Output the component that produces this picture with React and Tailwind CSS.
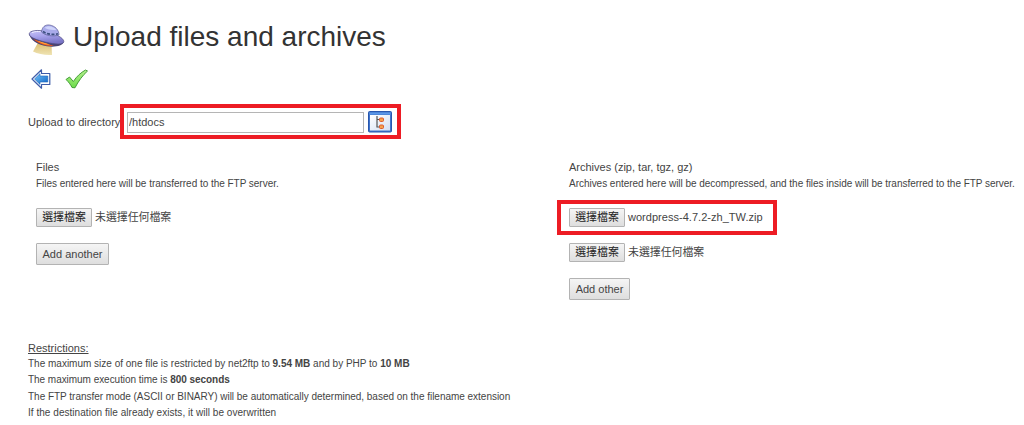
import clsx from 'clsx'

function UfoIcon() {
  return (
    <svg width="38" height="34" viewBox="0 0 38 34" className="shrink-0">
      <defs>
        <linearGradient id="hull" x1="0" y1="0" x2="0.3" y2="1">
          <stop offset="0" stopColor="#c9c6f8" />
          <stop offset="0.5" stopColor="#a5a0ea" />
          <stop offset="1" stopColor="#7a75c6" />
        </linearGradient>
        <linearGradient id="beam" x1="0" y1="0" x2="0" y2="1">
          <stop offset="0" stopColor="#d8b765" />
          <stop offset="1" stopColor="#efe4b4" />
        </linearGradient>
      </defs>
      <path d="M11 19 L5 29.500 C10 32 17 33.500 24 33 L23.500 22 Z" fill="url(#beam)" />
      <path d="M1.200 12 C2 17.500 9 23 19 24.300 C28 25.500 34.500 23.500 35.800 20 Z" fill="#4a4470" />
      <path d="M5.500 17 C10 21.500 18 24.500 26 23.800 C20 22 12 20 5.500 17 Z" fill="#f3591c" />
      <path d="M9 18.500 C13 21.500 18 23 22 22.800 C18 21 13 19.800 9 18.500 Z" fill="#fba23a" />
      <path
        d="M1.200 11.800 C1.500 8.500 10 7.500 18 9.500 C27 11.500 36 16 35.800 19.500 C35.500 23 27 22.500 18 20.300 C9 18 1 15.500 1.200 11.800 Z"
        fill="url(#hull)"
        stroke="#4c4980"
        strokeWidth="0.7"
      />
      <path
        d="M13.500 10 C14 5 17 2.500 21.500 3 C27 3.800 31 8 31 13 C25 15 17 13.500 13.500 10 Z"
        fill="#a9abea"
        stroke="#5a5b94"
        strokeWidth="0.7"
      />
      <path d="M16.500 5.800 C19.500 3 25 4 28.500 7.800 C24 8.300 20 7.700 16.500 5.800 Z" fill="#ced3fa" />
      <path d="M15 9.500 C19 12.300 25 13 30 11.700" fill="none" stroke="#3d4f80" strokeWidth="1.600" strokeDasharray="3 1.500" />
      <path d="M4 10.700 C7 9.300 10 9.300 12.500 9.700" fill="none" stroke="#eeedff" />
    </svg>
  )
}

function BackIcon() {
  return (
    <svg width="21" height="20" viewBox="0 0 21 20">
      <defs>
        <linearGradient id="arrow" x1="0" y1="0" x2="1" y2="1">
          <stop offset="0" stopColor="#75c6fa" />
          <stop offset="1" stopColor="#0c62c4" />
        </linearGradient>
      </defs>
      <path
        d="M1 10 L10.500 0.800 V4.500 H18.800 V15.500 H10.500 V19.200 Z"
        fill="#fff"
        stroke="#3e5ca9"
        strokeWidth="1.2"
        strokeLinejoin="round"
      />
      <path d="M3.500 10 L9 4.600 V7 H16.800 V13 H9 V15.400 Z" fill="url(#arrow)" stroke="#1c67bd" strokeWidth="0.6" />
    </svg>
  )
}

function CheckIcon() {
  return (
    <svg width="24" height="20" viewBox="0 0 24 20">
      <defs>
        <linearGradient id="tick" x1="0" y1="0" x2="0" y2="1">
          <stop offset="0" stopColor="#b4f08c" />
          <stop offset="1" stopColor="#6ddc4b" />
        </linearGradient>
      </defs>
      <path
        d="M1 10.500 L4.500 8 L8.300 12.500 C12 7 16 3.500 20.500 1 L22.500 2 C17.500 6.500 13.500 12 10 18.800 L7 18.500 C5.500 15.500 3.500 12.800 1 10.500 Z"
        fill="url(#tick)"
        stroke="#35942a"
        strokeWidth="0.9"
        strokeLinejoin="round"
      />
    </svg>
  )
}

function TreeIcon() {
  return (
    <svg width="24" height="22" viewBox="0 0 24 22">
      <defs>
        <linearGradient id="pane" x1="0" y1="0" x2="1" y2="1">
          <stop offset="0" stopColor="#fff" />
          <stop offset="1" stopColor="#d3dff3" />
        </linearGradient>
      </defs>
      <rect x="0.500" y="0.500" width="23" height="20.500" rx="1" fill="#3f74cb" stroke="#2856ae" />
      <rect x="1.500" y="1.500" width="21" height="2" fill="#5b97e8" />
      <rect x="2" y="4" width="20" height="15.500" fill="url(#pane)" />
      <path d="M9 5 V16 H12 M9 8.500 H12" fill="none" stroke="#555" strokeWidth="1.200" />
      <rect x="11.500" y="7" width="4" height="3.500" rx="1" fill="#f5a04a" stroke="#dc5a30" />
      <rect x="11.500" y="14" width="4" height="3.500" rx="1" fill="#f5a04a" stroke="#dc5a30" />
    </svg>
  )
}

// Red marker frame drawn over the parent
function Highlight({ className }) {
  return <div className={clsx('absolute border-4 border-[#ed1c24] pointer-events-none', className)} />
}

function Button({ className, children }) {
  return (
    <button
      className={clsx(
        'shrink-0 border border-[#b3b3b3] rounded-[1px] bg-linear-to-b from-[#f5f5f5] to-[#dedede] whitespace-nowrap',
        className
      )}
    >
      {children}
    </button>
  )
}

function FileInput({ fileName }) {
  return (
    <div className="flex items-center h-[19px] gap-[3px] text-[10.9px]">
      <Button className="w-14 h-[19px] leading-[17px] text-[#222]">選擇檔案</Button>
      <span className={clsx('whitespace-nowrap', fileName && 'text-[11px] tracking-[0.03px]')}>
        {fileName || '未選擇任何檔案'}
      </span>
    </div>
  )
}

function UploadColumn({ title, hint, children }) {
  return (
    <section>
      <h2 className="text-[11px] leading-4">{title}</h2>
      <p className="pt-px text-[10px] leading-4 tracking-[-0.03px] whitespace-nowrap">{hint}</p>
      <div className="flex flex-col items-start gap-4 pt-4">{children}</div>
    </section>
  )
}

export default function App() {
  return (
    <main className="w-[1024px] h-[425px] overflow-hidden bg-white pl-7 pt-[21px] text-[#444] font-['Liberation_Sans','Noto_Sans_CJK_TC',sans-serif]">
      <header className="flex items-center h-8">
        <div className="pt-1">
          <UfoIcon />
        </div>
        <h1 className="pl-[7px] text-[28px] leading-8 text-[#333]">Upload files and archives</h1>
      </header>

      <div className="flex items-center gap-[13px] pl-[3px] mt-4 h-5">
        <BackIcon />
        <CheckIcon />
      </div>

      <div className="relative flex items-center h-[22px] mt-[22px] text-[11px]">
        <label htmlFor="directory" className="w-[99px] whitespace-nowrap">
          Upload to directory:
        </label>
        <input
          id="directory"
          defaultValue="/htdocs"
          className="w-[237px] h-[21px] px-px border border-[#b5b5b5] bg-white text-[11px]"
        />
        <div className="pl-1">
          <TreeIcon />
        </div>
        <Highlight className="left-[92px] -top-[7px] w-[281px] h-[35px]" />
      </div>

      <div className="grid grid-cols-[533px_1fr] pl-2 mt-[26px] h-[181px]">
        <UploadColumn title="Files" hint="Files entered here will be transferred to the FTP server.">
          <FileInput />
          <Button className="w-[73px] h-[22px] text-[11px]">Add another</Button>
        </UploadColumn>
        <UploadColumn
          title="Archives (zip, tar, tgz, gz)"
          hint="Archives entered here will be decompressed, and the files inside will be transferred to the FTP server."
        >
          <div className="relative">
            <FileInput fileName="wordpress-4.7.2-zh_TW.zip" />
            <Highlight className="-left-[12px] -top-[8px] w-[220px] h-[35px]" />
          </div>
          <FileInput />
          <Button className="w-[61px] h-[22px] text-[11px]">Add other</Button>
        </UploadColumn>
      </div>

      <footer className="text-[10px] leading-[16.3px]">
        <h3 className="text-[11px] leading-4 underline">Restrictions:</h3>
        <p>
          The maximum size of one file is restricted by net2ftp to <b>9.54 MB</b> and by PHP to <b>10 MB</b>
        </p>
        <p className="tracking-[-0.04px]">
          The maximum execution time is <b>800 seconds</b>
        </p>
        <p className="tracking-[-0.02px]">
          The FTP transfer mode (ASCII or BINARY) will be automatically determined, based on the filename extension
        </p>
        <p className="tracking-[0.04px]">If the destination file already exists, it will be overwritten</p>
      </footer>
    </main>
  )
}
